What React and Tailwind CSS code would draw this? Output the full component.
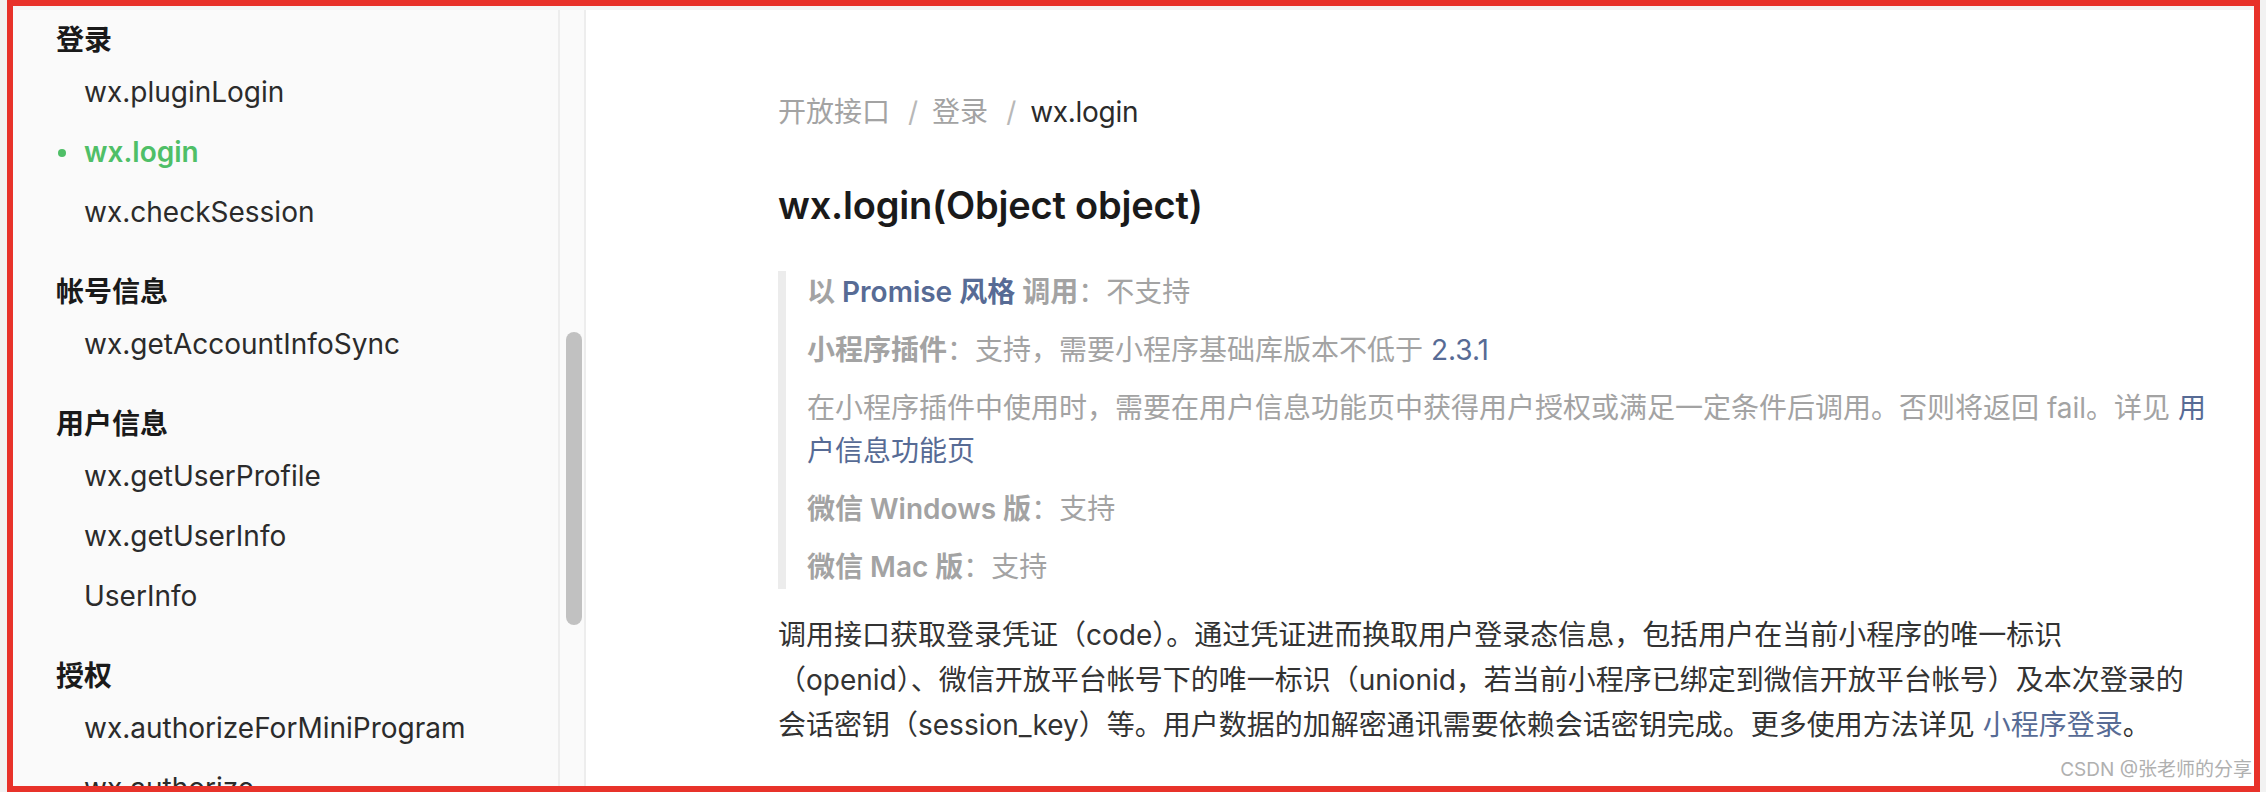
import React from "react";

const groups = [
  { title: "登录", items: ["wx.pluginLogin", "wx.login", "wx.checkSession"] },
  { title: "帐号信息", items: ["wx.getAccountInfoSync"] },
  { title: "用户信息", items: ["wx.getUserProfile", "wx.getUserInfo", "UserInfo"] },
  { title: "授权", items: ["wx.authorizeForMiniProgram", "wx.authorize"] },
];

function Sidebar() {
  return (
    <div className="flex h-full shrink-0 bg-[#fafafa]">
      <nav className="w-[545px] overflow-hidden pt-[8px]">
        {groups.map((g, gi) => (
          <div key={g.title} className={gi > 0 ? "mt-[28px]" : ""}>
            <div className="flex h-[44px] items-center pl-[43px] text-[28px] font-semibold text-[#1a1a1a]">
              {g.title}
            </div>
            {g.items.map((it) => {
              const active = it === "wx.login";
              return (
                <div
                  key={it}
                  className={
                    "relative flex h-[60px] items-center pl-[71px] text-[28px] " +
                    (active ? "font-semibold text-[#4fbf67]" : "text-[#2b2b2b]")
                  }
                >
                  {active && (
                    <span className="absolute left-[45px] top-[27px] h-[8px] w-[8px] rounded-full bg-[#4fbf67]" />
                  )}
                  {it}
                </div>
              );
            })}
          </div>
        ))}
      </nav>
      <div className="h-full w-[28px] border-x-2 border-[#ededed] bg-[#fafafa]">
        <div className="ml-[6px] mt-[322px] h-[293px] w-[16px] rounded-full bg-[#c1c1c1]" />
      </div>
    </div>
  );
}

function Main() {
  const link = "text-[#576b95]";
  return (
    <div className="relative h-full flex-1 overflow-hidden bg-white pl-[192px] pt-[82px]">
      <div className="flex h-[40px] items-center text-[28px] leading-[40px]">
        <span className="text-[#a3a3a3]">开放接口</span>
        <span className="ml-[18px] mr-[14px] text-[#b8b8b8]">/</span>
        <span className="text-[#a3a3a3]">登录</span>
        <span className="ml-[18px] mr-[14px] text-[#b8b8b8]">/</span>
        <span className="tracking-[-0.3px] text-[#2b2b2b]">wx.login</span>
      </div>
      <h1 className="mt-[47px] h-[52px] text-[38px] font-semibold leading-[52px] tracking-[-0.2px] text-[#1a1a1a]">
        wx.login(Object object)
      </h1>
      <div className="mt-[40px] w-[1460px] border-l-[8px] border-[#ececec] pl-[21px] text-[28px] leading-[43px] text-[#a3a3a3]">
        <p>
          <strong className="font-semibold">
            以 <a className={link}>Promise 风格</a> 调用
          </strong>
          ：不支持
        </p>
        <p className="mt-[15px]">
          <strong className="font-semibold">小程序插件</strong>：支持，需要小程序基础库版本不低于{" "}
          <a className={link}>2.3.1</a>
        </p>
        <p className="mt-[15px]">
          在小程序插件中使用时，需要在用户信息功能页中获得用户授权或满足一定条件后调用。否则将返回 fail。详见{" "}
          <a className={link}>
            用<br />
            户信息功能页
          </a>
        </p>
        <p className="mt-[15px]">
          <strong className="font-semibold">微信 Windows 版</strong>：支持
        </p>
        <p className="mt-[15px]">
          <strong className="font-semibold">微信 Mac 版</strong>：支持
        </p>
      </div>
      <p className="mt-[24px] w-[1460px] text-[28px] leading-[45px] text-[#333333]">
        调用接口获取登录凭证（code）。通过凭证进而换取用户登录态信息，包括用户在当前小程序的唯一标识
        <br />
        （openid）、微信开放平台帐号下的唯一标识（unionid，若当前小程序已绑定到微信开放平台帐号）及本次登录的
        <br />
        会话密钥（session_key）等。用户数据的加解密通讯需要依赖会话密钥完成。更多使用方法详见{" "}
        <a className={link}>小程序登录</a>。
      </p>
      <div className="absolute bottom-[3px] right-[2px] text-[19px] leading-[26px] text-[#b0b0b0]">
        CSDN @张老师的分享
      </div>
    </div>
  );
}

export default function App() {
  return (
    <div className="h-[792px] w-[2266px] overflow-hidden bg-[#f2f2f2] pl-[7px] font-[Inter,'Noto_Sans_CJK_SC',sans-serif]">
      <div className="flex h-[792px] w-[2253px] flex-col border-[6px] border-[#e8322a]">
        <div className="h-[4px] shrink-0 bg-[#f5f5f5]" />
        <div className="flex min-h-0 flex-1">
          <Sidebar />
          <Main />
        </div>
      </div>
    </div>
  );
}
